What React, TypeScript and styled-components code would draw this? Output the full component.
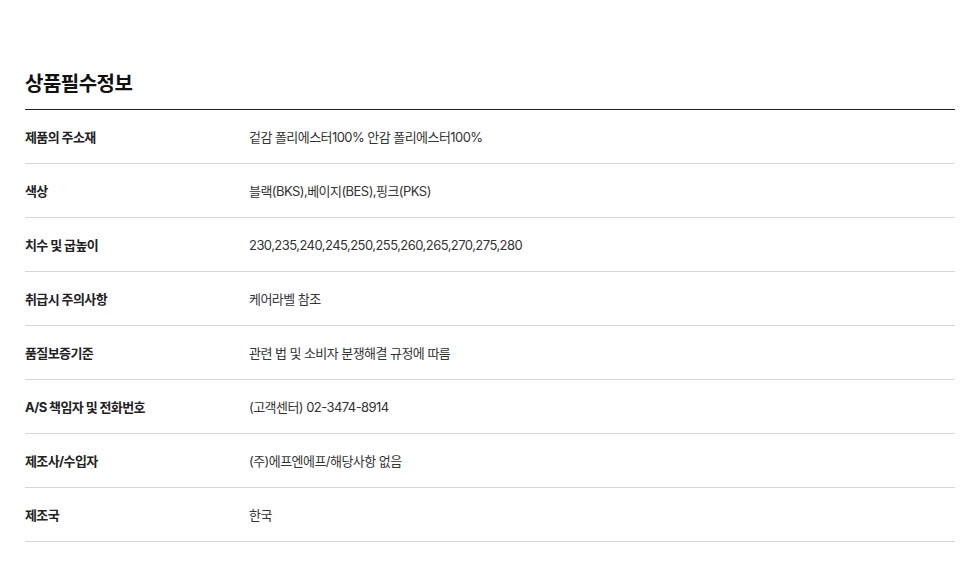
import React from 'react';
import styled, {createGlobalStyle} from 'styled-components';

const GlobalStyle = createGlobalStyle`
  body {
    margin: 0;
    background: #fff;
    font-family: "Inter", "Noto Sans CJK KR", sans-serif;
    color: #222;
  }
`

const Section = styled.section`
  width: 930px;
  margin-left: 25px;
  padding-top: 69px;
`

const Title = styled.h2`
  margin: 0;
  padding-bottom: 10px;
  font-size: 20px;
  line-height: 30px;
  font-weight: 700;
  letter-spacing: -0.5px;
  color: #111;
  border-bottom: 1px solid #222;
`

const Table = styled.dl`
  margin: 0;
`

const Row = styled.div`
  display: grid;
  grid-template-columns: 224px 1fr;
  align-items: center;
  height: 53px;
  border-bottom: 1px solid #d6d6d6;
`

const Label = styled.dt`
  font-size: 13px;
  font-weight: 700;
  letter-spacing: -0.6px;
  color: #222;
`

const Value = styled.dd`
  margin: 0;
  font-size: 13px;
  font-weight: 400;
  letter-spacing: -0.55px;
  color: #333;
`

const rows: [string, string][] = [
  ['제품의 주소재', '겉감 폴리에스터100% 안감 폴리에스터100%'],
  ['색상', '블랙(BKS),베이지(BES),핑크(PKS)'],
  ['치수 및 굽높이', '230,235,240,245,250,255,260,265,270,275,280'],
  ['취급시 주의사항', '케어라벨 참조'],
  ['품질보증기준', '관련 법 및 소비자 분쟁해결 규정에 따름'],
  ['A/S 책임자 및 전화번호', '(고객센터) 02-3474-8914'],
  ['제조사/수입자', '(주)에프엔에프/해당사항 없음'],
  ['제조국', '한국'],
]

const App: React.FC = () => {
  return (
    <>
      <GlobalStyle />
      <Section>
        <Title>상품필수정보</Title>
        <Table>
          {rows.map(([label, value]) => (
            <Row key={label}>
              <Label>{label}</Label>
              <Value>{value}</Value>
            </Row>
          ))}
        </Table>
      </Section>
    </>
  )
}

export default App;
